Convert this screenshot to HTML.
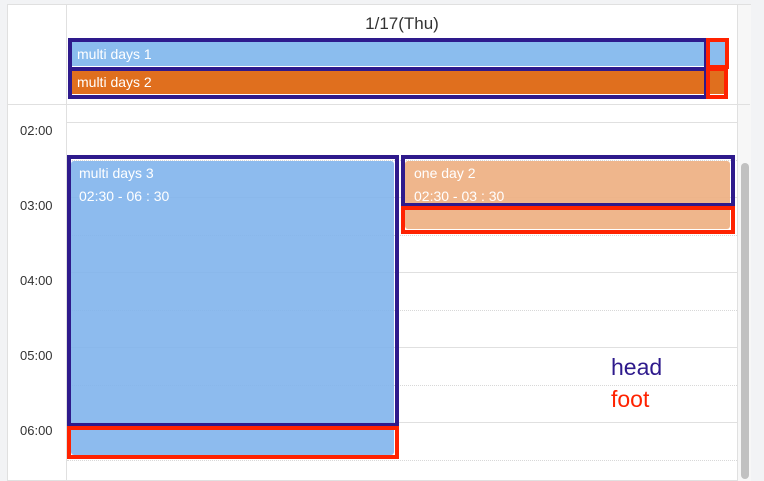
<!DOCTYPE html><html><head><style>
body{margin:0;width:764px;height:481px;background:#f2f3f5;position:relative;overflow:hidden;font-family:"Liberation Sans",sans-serif}
.a{position:absolute;box-sizing:border-box}
.card{left:7px;top:4px;width:744px;height:477px;background:#fff;border:1px solid #e0e0e0}
.h{height:1px;background:#e0e0e0;left:67px;width:670px}
.d{height:0;border-top:1px dotted #d8d8d8;left:67px;width:670px}
.t{left:20px;font-size:13px;color:#333}
.nb{border:4px solid #2e1a8c}
.rb{border:4px solid #ff2200}
.w{color:#fff;font-size:14px}
</style></head><body>
<div class="a card"></div>
<div class="a" style="left:66px;top:5px;width:1px;height:476px;background:#e0e0e0"></div>
<div class="a" style="left:737px;top:5px;width:14px;height:476px;background:#f7f7f7;border-left:1px solid #e0e0e0"></div>
<div class="a" style="left:8px;top:104px;width:742px;height:1px;background:#e0e0e0"></div>
<div class="a" style="left:67px;top:14px;width:670px;text-align:center;font-size:17px;color:#333">1/17(Thu)</div>
<div class="a" style="left:72px;top:42px;width:633px;height:24px;background:#8bbdee"></div>
<div class="a w" style="left:77px;top:46px">multi days 1</div>
<div class="a" style="left:72px;top:71px;width:633px;height:23px;background:#e06f1e"></div>
<div class="a w" style="left:77px;top:74px">multi days 2</div>
<div class="a" style="left:710px;top:42px;width:16px;height:24px;background:#8bbdee"></div>
<div class="a" style="left:710px;top:71px;width:16px;height:23px;background:#e06f1e"></div>
<div class="a nb" style="left:68px;top:38px;width:640px;height:61px"></div>
<div class="a nb" style="left:68px;top:38px;width:640px;height:33px;border-bottom-width:4px"></div>
<div class="a rb" style="left:706px;top:38px;width:23px;height:31px"></div>
<div class="a rb" style="left:706px;top:67px;width:22px;height:32px"></div>
<div class="a h" style="top:122px"></div><div class="a h" style="top:197px"></div><div class="a h" style="top:272px"></div><div class="a h" style="top:347px"></div><div class="a h" style="top:422px"></div>
<div class="a d" style="top:160px"></div><div class="a d" style="top:235px"></div><div class="a d" style="top:310px"></div><div class="a d" style="top:385px"></div><div class="a d" style="top:460px"></div>
<div class="a t" style="top:123px">02:00</div><div class="a t" style="top:198px">03:00</div><div class="a t" style="top:273px">04:00</div><div class="a t" style="top:348px">05:00</div><div class="a t" style="top:423px">06:00</div>
<div class="a" style="left:71px;top:161px;width:323px;height:294px;background:rgba(125,178,236,.88);border-radius:3px"></div>
<div class="a w" style="left:79px;top:165px">multi days 3</div>
<div class="a w" style="left:79px;top:188px">02:30 - 06 : 30</div>
<div class="a" style="left:405px;top:161px;width:325px;height:68px;background:rgba(238,176,130,.92);border-radius:3px"></div>
<div class="a w" style="left:414px;top:165px">one day 2</div>
<div class="a w" style="left:414px;top:188px">02:30 - 03 : 30</div>
<div class="a nb" style="left:67px;top:155px;width:332px;height:272px"></div>
<div class="a rb" style="left:67px;top:426px;width:332px;height:33px"></div>
<div class="a nb" style="left:401px;top:155px;width:334px;height:52px"></div>
<div class="a rb" style="left:401px;top:206px;width:334px;height:28px"></div>
<div class="a" style="left:611px;top:354px;font-size:23px;color:#2e1a8c">head</div>
<div class="a" style="left:611px;top:386px;font-size:23px;color:#ff2200">foot</div>
<div class="a" style="left:741px;top:163px;width:8px;height:316px;background:#c1c1c1;border-radius:4px"></div>
</body></html>
